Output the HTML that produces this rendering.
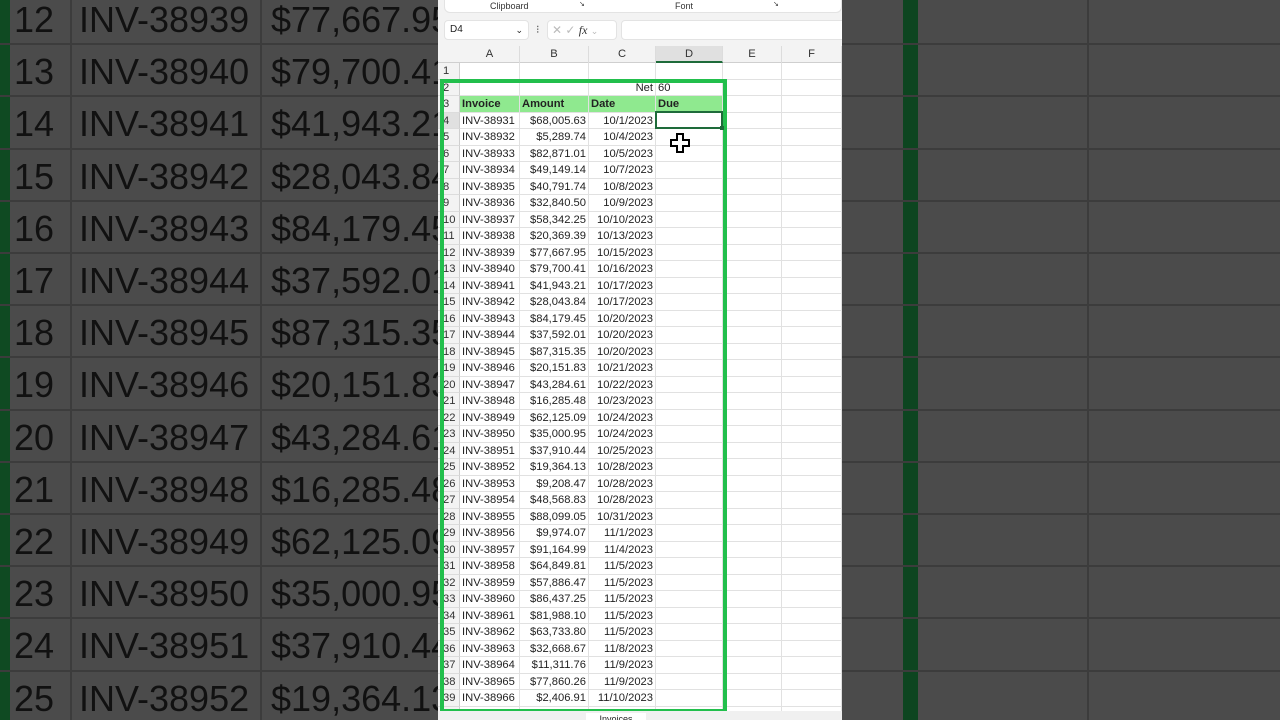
<!DOCTYPE html>
<html><head><meta charset="utf-8"><style>
*{margin:0;padding:0;box-sizing:border-box}
body{width:1280px;height:720px;overflow:hidden;background:#4b4b4b;font-family:"Liberation Sans",Arial,sans-serif;position:relative}
#left{position:absolute;left:0;top:0;width:438px;height:720px;overflow:hidden;background:#4b4b4b}
.lr{position:absolute;left:0;width:438px;height:52.2px;border-bottom:2px solid #3c3c3c;font-size:36px;color:#111;white-space:nowrap}
.lr span{position:absolute;top:6px}
#right{position:absolute;left:842px;top:0;width:438px;height:720px;background:#4b4b4b;overflow:hidden}
#xl{position:absolute;left:438px;top:0;width:404px;height:720px;background:#fff;overflow:hidden;font-size:11.2px;color:#222}
.c{position:absolute;height:16.5px;line-height:16px;border-right:1px solid #e1e1e1;border-bottom:1px solid #e1e1e1;white-space:nowrap;padding:0 2px}
.rh{position:absolute;left:0;width:22px;height:16.5px;line-height:16px;padding-left:5px;background:#f3f3f3;border-right:1px solid #cfcfcf;border-bottom:1px solid #dcdcdc;color:#333}
</style></head><body>
<div id="left">
<div style="position:absolute;left:0;top:0;width:10px;height:720px;background:#0f4a22"></div>
<div style="position:absolute;left:70px;top:0;width:2px;height:720px;background:#3c3c3c"></div>
<div style="position:absolute;left:260px;top:0;width:2px;height:720px;background:#3c3c3c"></div>
<div id="lrows"></div>
</div>
<div id="right">
<div style="position:absolute;left:61px;top:0;width:15px;height:720px;background:#0d4520"></div>
<div style="position:absolute;left:245px;top:0;width:2px;height:720px;background:#3c3c3c"></div>
<div id="rrows"></div>
</div>
<div id="xl">
<div style="position:absolute;left:0;top:0;width:404px;height:46px;background:#f3f3f3"></div>
<div style="position:absolute;left:6px;top:-4px;width:398px;height:17px;background:#fff;border-radius:0 0 6px 6px;border:1px solid #e3e3e3;font-size:9px;color:#333">
<span style="position:absolute;left:45px;top:4px">Clipboard</span><span style="position:absolute;left:134px;top:3px;font-size:7px">↘</span>
<span style="position:absolute;left:230px;top:4px">Font</span><span style="position:absolute;left:328px;top:3px;font-size:7px">↘</span></div>
<div style="position:absolute;left:6px;top:20px;width:85px;height:20px;background:#fff;border-radius:4px;border:1px solid #e3e3e3;font-size:10px;line-height:18px;padding-left:5px">D4<span style="position:absolute;right:5px;top:0;font-size:9px">⌄</span></div>
<span style="position:absolute;left:98px;top:23px;font-size:11px;color:#555">⁝</span>
<div style="position:absolute;left:109px;top:20px;width:70px;height:20px;background:#fff;border-radius:4px;border:1px solid #e3e3e3;font-size:12px;line-height:18px;color:#bbb;padding-left:4px">✕ ✓ <i style="font-family:'Liberation Serif',serif;color:#333">fx</i> <span style="font-size:9px">⌄</span></div>
<div style="position:absolute;left:183px;top:20px;width:230px;height:20px;background:#fff;border-radius:4px;border:1px solid #e3e3e3"></div>
<div id="grid"></div>
<div style="position:absolute;left:2px;top:79px;width:287px;height:634px;border:4px solid #22bf4c"></div>
<div style="position:absolute;left:217px;top:111px;width:68px;height:18px;border:2px solid #1e6b3a"></div>
<div style="position:absolute;left:282px;top:126px;width:4px;height:4px;background:#1e6b3a"></div>
<svg style="position:absolute;left:232px;top:133px" width="20" height="20" viewBox="0 0 20 20"><path d="M7 1h6v6h6v6h-6v6H7v-6H1V7h6z" fill="#fff" stroke="#000" stroke-width="2"/></svg>
<div style="position:absolute;left:0;top:711px;width:404px;height:9px;background:#f0f0f0"></div>
<div style="position:absolute;left:148px;top:713px;width:60px;height:7px;background:#fff;font-size:9px;text-align:center;line-height:12px">Invoices</div>
</div>
<script>
const d=[["INV-38931","$68,005.63","10/1/2023"],["INV-38932","$5,289.74","10/4/2023"],["INV-38933","$82,871.01","10/5/2023"],["INV-38934","$49,149.14","10/7/2023"],["INV-38935","$40,791.74","10/8/2023"],["INV-38936","$32,840.50","10/9/2023"],["INV-38937","$58,342.25","10/10/2023"],["INV-38938","$20,369.39","10/13/2023"],["INV-38939","$77,667.95","10/15/2023"],["INV-38940","$79,700.41","10/16/2023"],["INV-38941","$41,943.21","10/17/2023"],["INV-38942","$28,043.84","10/17/2023"],["INV-38943","$84,179.45","10/20/2023"],["INV-38944","$37,592.01","10/20/2023"],["INV-38945","$87,315.35","10/20/2023"],["INV-38946","$20,151.83","10/21/2023"],["INV-38947","$43,284.61","10/22/2023"],["INV-38948","$16,285.48","10/23/2023"],["INV-38949","$62,125.09","10/24/2023"],["INV-38950","$35,000.95","10/24/2023"],["INV-38951","$37,910.44","10/25/2023"],["INV-38952","$19,364.13","10/28/2023"],["INV-38953","$9,208.47","10/28/2023"],["INV-38954","$48,568.83","10/28/2023"],["INV-38955","$88,099.05","10/31/2023"],["INV-38956","$9,974.07","11/1/2023"],["INV-38957","$91,164.99","11/4/2023"],["INV-38958","$64,849.81","11/5/2023"],["INV-38959","$57,886.47","11/5/2023"],["INV-38960","$86,437.25","11/5/2023"],["INV-38961","$81,988.10","11/5/2023"],["INV-38962","$63,733.80","11/5/2023"],["INV-38963","$32,668.67","11/8/2023"],["INV-38964","$11,311.76","11/9/2023"],["INV-38965","$77,860.26","11/9/2023"],["INV-38966","$2,406.91","11/10/2023"]];
let h="";
for(let i=0;i<14;i++){const r=d[i+8];const t=-7+i*52.2;h+=`<div class="lr" style="top:${t}px"><span style="left:14px">${12+i}</span><span style="left:79px">${r[0]}</span><span style="left:271px">${r[1]}</span></div>`}
document.getElementById('lrows').innerHTML=h;
h="";for(let i=0;i<14;i++){h+=`<div class="lr" style="top:${-7+i*52.2}px;width:438px"></div>`}
document.getElementById('rrows').innerHTML=h;
const cx=[22,82,151,218,285,344,404];
let g="";
g+=`<div style="position:absolute;left:0;top:46px;width:404px;height:17px;background:#f3f3f3;border-bottom:1px solid #cfcfcf"></div>`;
"ABCDEF".split("").forEach((L,j)=>{g+=`<div style="position:absolute;left:${cx[j]}px;top:46px;width:${cx[j+1]-cx[j]}px;height:17px;line-height:16px;text-align:center;border-right:1px solid #dcdcdc;${j==3?'background:#e0e0e0;border-bottom:2px solid #1e6b3a;':''}color:#333">${L}</div>`});
for(let n=1;n<=40;n++){const t=63+(n-1)*16.5;
g+=`<div class="rh" style="top:${t}px;${n==4?'background:#e0e0e0;':''}">${n}</div>`;
let v=["","","","","",""],st=["","","","","",""];
if(n==2){v[2]="Net";st[2]="text-align:right;";v[3]="60"}
if(n==3){v=["Invoice","Amount","Date","Due","",""]}
if(n>=4&&n<=39){const r=d[n-4];v[0]=r[0];v[1]=r[1];st[1]="text-align:right;";v[2]=r[2];st[2]="text-align:right;"}
for(let j=0;j<6;j++){let bg=(n==3&&j<4)?'background:#8fe98f;font-weight:bold;':'';
g+=`<div class="c" style="left:${cx[j]}px;top:${t}px;width:${cx[j+1]-cx[j]}px;${st[j]}${bg}">${v[j]}</div>`}}
document.getElementById('grid').innerHTML=g;
</script>
</body></html>
